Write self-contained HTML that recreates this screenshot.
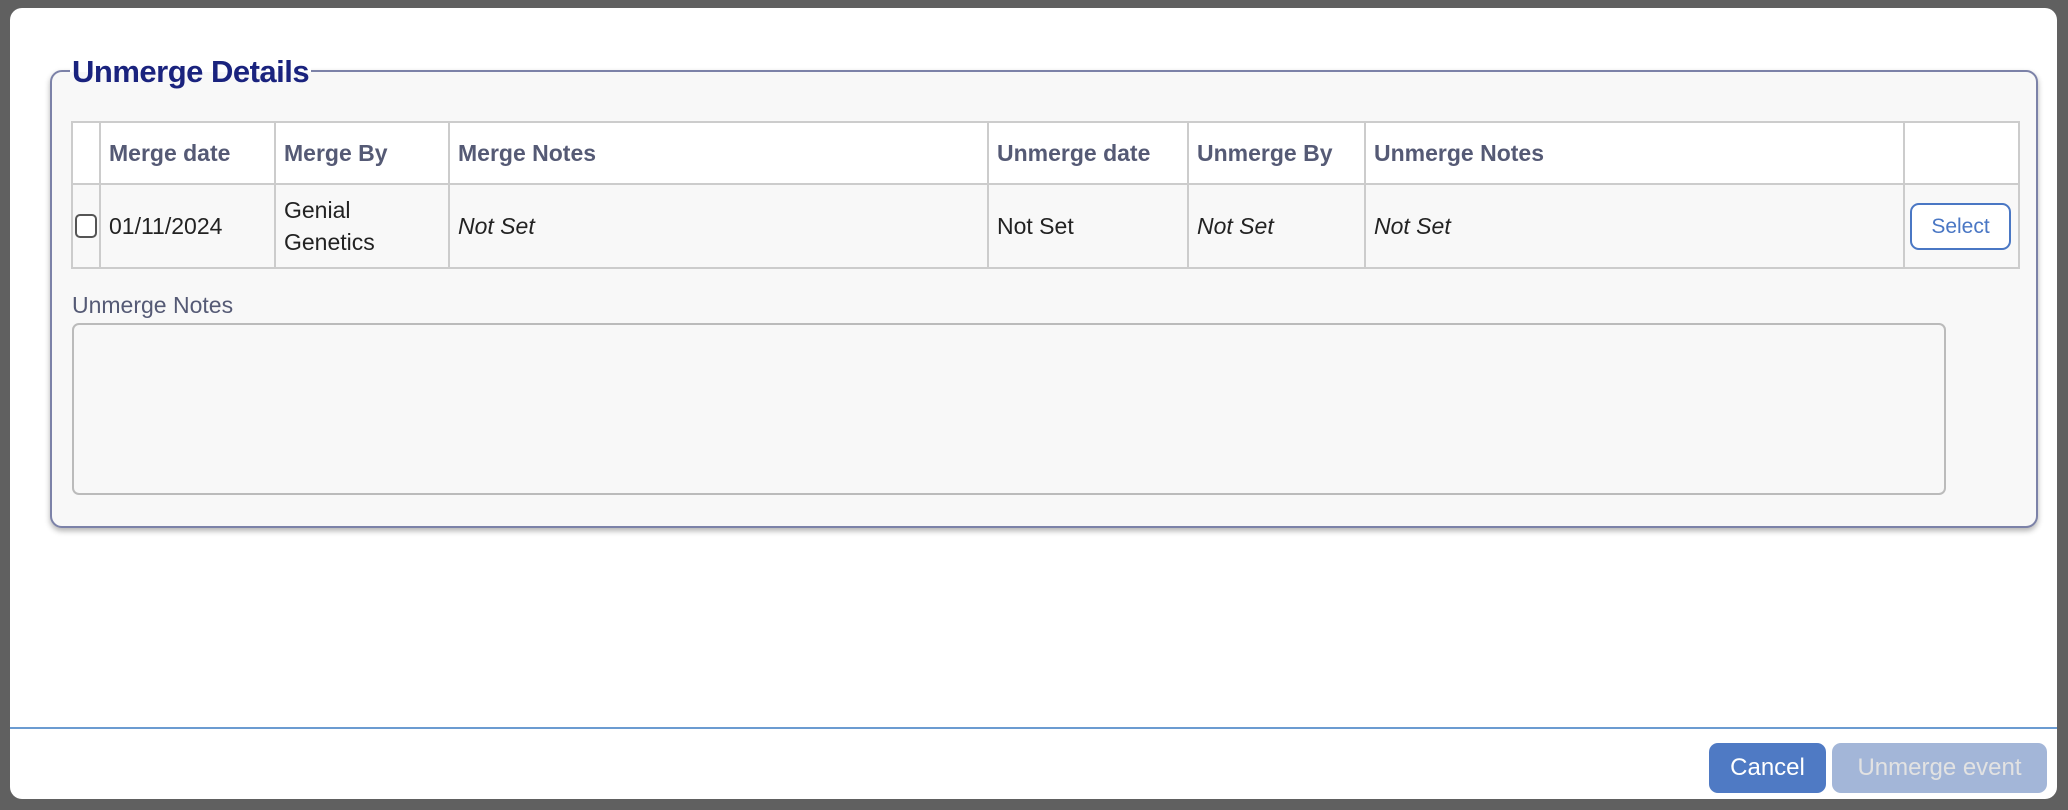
<!DOCTYPE html>
<html><head><style>
*{box-sizing:border-box;margin:0;padding:0}
body{width:2068px;height:810px;background:#606060;position:relative;overflow:hidden;font-family:"Liberation Sans",sans-serif}
.dlg{position:absolute;left:10px;top:8px;width:2047px;height:791px;background:#fff;border-radius:12px}
.fs{position:absolute;left:40px;top:62px;width:1988px;height:458px;background:#f8f8f8;border:2px solid #7c82a8;border-radius:12px;box-shadow:0 3px 6px rgba(0,0,0,.3)}
.lg{position:absolute;left:60px;top:46px;padding:0 2px;font-weight:bold;font-size:31px;color:#1a237e;letter-spacing:-0.5px;background:linear-gradient(#fff 50%,#f8f8f8 50%)}
table{position:absolute;left:61px;top:113px;border-collapse:collapse;font-size:23px}
td,th{border:2px solid #ccc;text-align:left;padding:0 8px;vertical-align:middle}
th{background:#fff;height:62px;color:#555a75;font-weight:bold}
td{height:84px;color:#222;background:#f8f8f8}
i{color:#222}
.sel{display:inline-block;width:101px;height:47px;border:2px solid #4a77c4;border-radius:9px;color:#4a77c4;font-size:21px;text-align:center;line-height:43px;background:#fff}
.lab{position:absolute;left:62px;top:284px;font-size:23px;color:#555a75}
.ta{position:absolute;left:62px;top:315px;width:1874px;height:172px;border:2px solid #bbb;border-radius:7px;background:#f8f8f8}
.line{position:absolute;left:0;top:719px;width:100%;height:2px;background:#6b9bd1}
.btn{position:absolute;top:735px;height:50px;border-radius:9px;font-size:24px;text-align:center;line-height:50px}
</style></head><body>
<div class="dlg">
<div class="fs"></div>
<div class="lg">Unmerge Details</div>
<table>
<tr><th style="width:28px"></th><th style="width:175px">Merge date</th><th style="width:174px">Merge By</th><th style="width:539px">Merge Notes</th><th style="width:200px">Unmerge date</th><th style="width:177px">Unmerge By</th><th style="width:539px">Unmerge Notes</th><th style="width:115px"></th></tr>
<tr><td style="padding:0 2px"><div style="width:22px;height:24px;border:2px solid #555;border-radius:5px;background:#fff"></div></td><td>01/11/2024</td><td style="line-height:32px">Genial<br>Genetics</td><td><i>Not Set</i></td><td>Not Set</td><td><i>Not Set</i></td><td><i>Not Set</i></td><td style="padding:0 5px"><span class="sel">Select</span></td></tr>
</table>
<div class="lab">Unmerge Notes</div>
<div class="ta"></div>
<div class="line"></div>
<div class="btn" style="left:1699px;width:117px;background:#4f7ac4;color:#fff">Cancel</div>
<div class="btn" style="left:1822px;width:215px;background:#a3b6d8;color:#e2e2e2">Unmerge event</div>
</div>
</body></html>
